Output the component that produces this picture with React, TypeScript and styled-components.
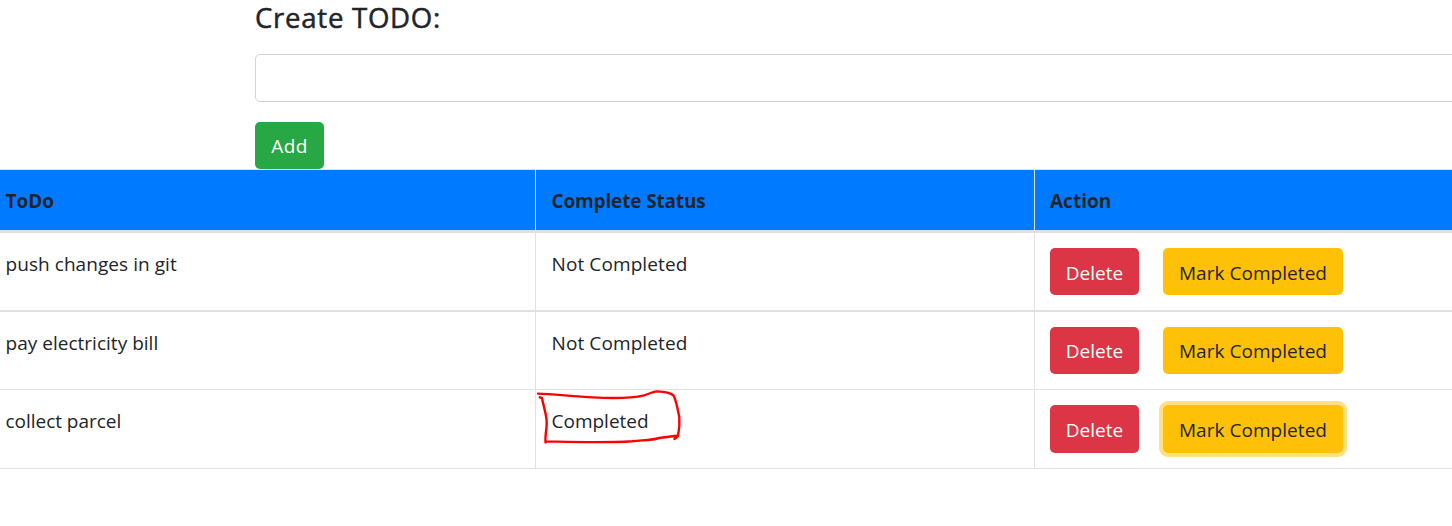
import React from "react";
import styled, { createGlobalStyle } from "styled-components";

const GlobalStyle = createGlobalStyle`
  *, *::before, *::after { box-sizing: border-box; }
  body {
    margin: 0;
    background: #fff;
    color: #212529;
    font: 400 19px/30px "Open Sans", "Noto Sans", sans-serif;
    overflow: hidden;
  }
`;

const Page = styled.main`
  width: 100%;
  height: 526px;
  overflow: hidden;
`;

const CreateForm = styled.section`
  display: flex;
  flex-direction: column;
  align-items: flex-start;
  height: 169px;
  padding-left: 255px;
`;

const Title = styled.h1`
  margin: 0 0 19px;
  font-size: 27.6px;
  font-weight: 500;
  line-height: 35px;
  -webkit-text-stroke: 0.5px #212529;
  white-space: nowrap;
`;

const TodoInput = styled.input`
  width: calc(100% + 20px);
  height: 48px;
  margin: 0 0 20px;
  padding: 7px 15px;
  border: 1px solid #ced4da;
  border-radius: 5px;
  background: #fff;
  font: inherit;
`;

const tones = {
  success: ["#28a745", "#fff"],
  danger: ["#dc3545", "#fff"],
  warning: ["#ffc107", "#212529"],
};

const Button = styled.button<{
  $tone: keyof typeof tones;
  $width: number;
  $height?: number;
  $padTop?: number;
  $ring?: boolean;
}>`
  flex: none;
  width: ${(p) => p.$width}px;
  height: ${(p) => p.$height ?? 47}px;
  padding: ${(p) => p.$padTop ?? 0}px 0 0;
  border: 0;
  border-radius: 5px;
  background: ${(p) => tones[p.$tone][0]};
  color: ${(p) => tones[p.$tone][1]};
  box-shadow: ${(p) => (p.$ring ? "0 0 0 4px #ffe083" : "none")};
  font: inherit;
  white-space: nowrap;
`;

const Label = styled.span<{ $spacing?: number }>`
  letter-spacing: ${(p) => p.$spacing ?? 0}px;
`;

const Table = styled.div`
  border-top: 1px solid #dee2e6;
`;

const Row = styled.div<{ $height: number; $line: number; $head?: boolean }>`
  display: grid;
  grid-template-columns: 536px 499px 1fr;
  height: ${(p) => p.$height}px;
  border-bottom: ${(p) => p.$line}px solid #dee2e6;
  background: ${(p) => (p.$head ? "#007bff" : "#fff")};
  font-weight: ${(p) => (p.$head ? 700 : 400)};
`;

const Cell = styled.div`
  padding: 16px 15.5px 0;
  border-right: 1px solid #dee2e6;
  white-space: nowrap;

  &:first-child { padding-left: 5.5px; }
  &:last-child { border-right: 0; padding-left: 15px; }
`;

const Actions = styled(Cell)`
  display: flex;
  align-items: flex-start;
  gap: 24px;
  padding-top: 15px;
`;

const Marked = styled.span`
  position: relative;
`;

const Scribble = styled.svg`
  position: absolute;
  left: -16.5px;
  top: -21px;
  overflow: visible;
  pointer-events: none;
`;

const todos = [
  { text: "push changes in git", spacing: 0.06, done: false, height: 79, line: 2, padTop: 2 },
  { text: "pay electricity bill", spacing: 0.02, done: false, height: 78, line: 1, padTop: 0 },
  { text: "collect parcel", spacing: -0.03, done: true, height: 79, line: 1, padTop: 2 },
];

function RedOutline() {
  return (
    <Scribble width="150" height="60" viewBox="535 387 150 60" fill="none" stroke="#ff0000" strokeWidth="2.4" strokeLinecap="round" strokeLinejoin="round">
      <path d="M538 393.6C552 393.8 573 396.5 593 397.4C613 398.5 631 398.5 644 395.3C650 393.6 653 391.5 657 391.4C664 392 669 391.5 673.5 395.5C676.5 401 677.5 409 679.3 417C680 425 679 431 678 436L674.5 439M676.5 435.8L659 438C652 440.5 642 440 632 441.2C605 443 575 442 546 441.4L545.5 442.5C545 436 546.5 430 546.7 424C547 415 543.5 407 542 398L539.8 397.3" />
    </Scribble>
  );
}

export default function App() {
  return (
    <>
      <GlobalStyle />
      <Page>
        <CreateForm>
          <Title><Label $spacing={0.72}>Create TODO:</Label></Title>
          <TodoInput aria-label="New todo" />
          <Button $tone="success" $width={69}><Label $spacing={0.4}>Add</Label></Button>
        </CreateForm>
        <Table>
          <Row $head $height={63} $line={3}>
            <Cell><Label>ToDo</Label></Cell>
            <Cell><Label $spacing={-0.15}>Complete Status</Label></Cell>
            <Cell><Label>Action</Label></Cell>
          </Row>
          {todos.map((t) => (
            <Row key={t.text} $height={t.height} $line={t.line}>
              <Cell><Label $spacing={t.spacing}>{t.text}</Label></Cell>
              <Cell>
                {t.done ? (
                  <Marked><Label>Completed</Label><RedOutline /></Marked>
                ) : (
                  <Label $spacing={0.1}>Not Completed</Label>
                )}
              </Cell>
              <Actions>
                <Button $tone="danger" $width={89} $height={t.done ? 48 : 47} $padTop={t.padTop}>
                  <Label>Delete</Label>
                </Button>
                <Button $tone="warning" $width={180} $height={t.done ? 48 : 47} $padTop={t.padTop} $ring={t.done}>
                  <Label $spacing={0.04}>Mark Completed</Label>
                </Button>
              </Actions>
            </Row>
          ))}
        </Table>
      </Page>
    </>
  );
}
